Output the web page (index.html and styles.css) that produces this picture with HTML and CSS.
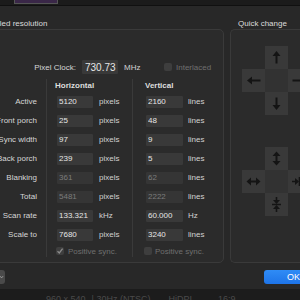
FILE: index.html
```html
<!DOCTYPE html>
<html lang="en">
<head>
    <meta charset="UTF-8">
    <meta name="viewport" content="width=device-width, initial-scale=1.0">
    <title>Custom Resolution</title>
    <link rel="stylesheet" href="styles.css">
</head>
<body>

    <div class="topbar"><div class="thumb"></div></div>

    <div class="sheet">
        <div class="panes">
            <section class="pane pane-main">
                <h2 class="pane-title">Scaled resolution</h2>
                <div class="group group-main">
                    <div class="clock-row">
                        <label class="clock-label" for="clock">Pixel Clock:</label>
                        <input class="field field-big" id="clock" type="text" value="730.73">
                        <span class="unit unit-mhz">MHz</span>
                        <span class="check"></span>
                        <span class="check-label">Interlaced</span>
                    </div>

                    <div class="timing">
                        <div class="col col-labels">
                            <div class="col-head"></div>
                            <div class="row">Active</div>
                            <div class="row">Front porch</div>
                            <div class="row">Sync width</div>
                            <div class="row">Back porch</div>
                            <div class="row">Blanking</div>
                            <div class="row">Total</div>
                            <div class="row">Scan rate</div>
                            <div class="row">Scale to</div>
                        </div>

                        <div class="col col-h">
                            <div class="col-head">Horizontal</div>
                            <div class="row"><input class="field" type="text" value="5120"><span class="unit">pixels</span></div>
                            <div class="row"><input class="field" type="text" value="25"><span class="unit">pixels</span></div>
                            <div class="row"><input class="field" type="text" value="97"><span class="unit">pixels</span></div>
                            <div class="row"><input class="field" type="text" value="239"><span class="unit">pixels</span></div>
                            <div class="row"><input class="field" type="text" value="361" disabled><span class="unit">pixels</span></div>
                            <div class="row"><input class="field" type="text" value="5481" disabled><span class="unit">pixels</span></div>
                            <div class="row"><input class="field" type="text" value="133.321"><span class="unit">kHz</span></div>
                            <div class="row"><input class="field" type="text" value="7680"><span class="unit">pixels</span></div>
                            <div class="sync-row">
                                <span class="check checked">
                                    <svg width="8" height="8" viewBox="0 0 8 8"><path d="M1.5 4.2 L3.3 6 L6.6 1.6" fill="none" stroke="#8a8a8a" stroke-width="1.3"/></svg>
                                </span>
                                <span class="check-label">Positive sync.</span>
                            </div>
                        </div>

                        <div class="col col-v">
                            <div class="col-head">Vertical</div>
                            <div class="row"><input class="field" type="text" value="2160"><span class="unit">lines</span></div>
                            <div class="row"><input class="field" type="text" value="48"><span class="unit">lines</span></div>
                            <div class="row"><input class="field" type="text" value="9"><span class="unit">lines</span></div>
                            <div class="row"><input class="field" type="text" value="5"><span class="unit">lines</span></div>
                            <div class="row"><input class="field" type="text" value="62" disabled><span class="unit">lines</span></div>
                            <div class="row"><input class="field" type="text" value="2222" disabled><span class="unit">lines</span></div>
                            <div class="row"><input class="field" type="text" value="60.000"><span class="unit">Hz</span></div>
                            <div class="row"><input class="field" type="text" value="3240"><span class="unit">lines</span></div>
                            <div class="sync-row">
                                <span class="check"></span>
                                <span class="check-label">Positive sync.</span>
                            </div>
                        </div>
                    </div>
                </div>
            </section>

            <section class="pane pane-quick">
                <h2 class="pane-title">Quick change</h2>
                <div class="group group-quick">
                    <!-- move -->
                    <div class="pad">
                        <div class="cell c-top">
                            <svg width="23" height="23" viewBox="0 0 23 23"><path d="M11.5 9 V17.5" stroke="#141414" stroke-width="2"/><path d="M11.5 5 L7.5 10 H15.5 Z" fill="#141414"/></svg>
                        </div>
                        <div class="cell c-left">
                            <svg width="23" height="23" viewBox="0 0 23 23"><path d="M9 11.5 H18.5" stroke="#141414" stroke-width="2"/><path d="M5 11.5 L10 7.5 V15.5 Z" fill="#141414"/></svg>
                        </div>
                        <div class="cell c-mid"></div>
                        <div class="cell c-right">
                            <svg width="23" height="23" viewBox="0 0 23 23"><path d="M4.5 11.5 H14" stroke="#141414" stroke-width="2"/><path d="M18 11.5 L13 7.5 V15.5 Z" fill="#141414"/></svg>
                        </div>
                        <div class="cell c-bottom">
                            <svg width="23" height="23" viewBox="0 0 23 23"><path d="M11.5 5.5 V14" stroke="#141414" stroke-width="2"/><path d="M11.5 18 L7.5 13 H15.5 Z" fill="#141414"/></svg>
                        </div>
                    </div>
                    <!-- resize -->
                    <div class="pad">
                        <div class="cell c-top">
                            <svg width="23" height="23" viewBox="0 0 23 23"><path d="M11.5 8 V15" stroke="#141414" stroke-width="2"/><path d="M11.5 4.5 L7.5 9 H15.5 Z M11.5 18.5 L7.5 14 H15.5 Z" fill="#141414"/></svg>
                        </div>
                        <div class="cell c-left">
                            <svg width="23" height="23" viewBox="0 0 23 23"><path d="M8 11.5 H15" stroke="#141414" stroke-width="2"/><path d="M4.5 11.5 L9 7.5 V15.5 Z M18.5 11.5 L14 7.5 V15.5 Z" fill="#141414"/></svg>
                        </div>
                        <div class="cell c-mid"></div>
                        <div class="cell c-right">
                            <svg width="23" height="23" viewBox="0 0 23 23"><path d="M4 11.5 H8 M15 11.5 H19 M11.5 7 V16" stroke="#141414" stroke-width="1.6"/><path d="M11 11.5 L7 8 V15 Z M12 11.5 L16 8 V15 Z" fill="#141414"/></svg>
                        </div>
                        <div class="cell c-bottom">
                            <svg width="23" height="23" viewBox="0 0 23 23"><path d="M11.5 4 V8 M11.5 15 V19 M7 11.5 H16" stroke="#141414" stroke-width="1.6"/><path d="M11.5 11 L8 7 H15 Z M11.5 12 L8 16 H15 Z" fill="#141414"/></svg>
                        </div>
                    </div>
                </div>
            </section>
        </div>

        <div class="actions">
            <button class="popup">
                <svg width="8" height="14" viewBox="0 0 8 14"><path d="M0 5.5 L2.5 8.5 L5 5.5" fill="none" stroke="#bdbdbd" stroke-width="1"/></svg>
            </button>
            <button class="ok">OK</button>
        </div>
    </div>

    <div class="behind">
        <span class="dot"></span>
        <span class="b1">960 x 540</span>
        <span class="b2">| 30Hz (NTSC)</span>
        <span class="b3">HiDPI</span>
        <span class="b4">16:9</span>
        <span class="b5">Enabled</span>
    </div>

</body>
</html>
```

FILE: styles.css
```css
body {
    margin: 0;
    width: 300px;
    height: 300px;
    overflow: hidden;
    background-color: #1c1c1c;
    font-family: 'Liberation Sans', Arial, Helvetica, sans-serif;
    font-size: 8px;
    color: #d6d6d6;
}

.topbar {
    height: 5px;
    background-color: #1b1b1b;
    border-bottom: 1px solid #101010;
}

.thumb {
    width: 42px;
    height: 3px;
    margin-left: 14px;
    background-color: #3a2748;
    border: 1px solid #555;
    border-top: none;
}

.sheet {
    background-color: #282828;
    padding: 13px 0 5px;
}

.panes {
    display: flex;
    align-items: stretch;
}

.pane {
    display: flex;
    flex-direction: column;
}

.pane-main {
    margin-left: -20px;
    width: 244px;
    flex-shrink: 0;
}

.pane-quick {
    margin-left: 6px;
    width: 90px;
    flex-shrink: 0;
}

.pane-title {
    margin: 0;
    font-size: 8px;
    font-weight: normal;
    line-height: 10px;
    height: 10px;
    color: #dcdcdc;
    padding-left: 6px;
}

.pane-quick .pane-title {
    padding-left: 8px;
}

.group {
    flex: 1;
    background-color: #2b2b2b;
    border: 1px solid #3a3a3a;
    border-radius: 5px;
    box-sizing: border-box;
}

.group-main {
    padding: 30px 0 5px;
}

/* pixel clock */
.clock-row {
    display: flex;
    align-items: center;
    height: 14px;
}

.clock-label {
    width: 95px;
    text-align: right;
    flex-shrink: 0;
}

.field {
    width: 36px;
    height: 12px;
    margin: 0;
    padding: 0 0 0 2px;
    box-sizing: border-box;
    border: none;
    border-radius: 1px;
    background-color: #393939;
    color: #e6e6e6;
    font-family: inherit;
    font-size: 8px;
    line-height: 12px;
    outline: none;
}

.field:disabled {
    color: #7c7c7c;
    background-color: #353535;
}

.field-big {
    height: 14px;
    margin-left: 6px;
    padding-left: 3px;
    font-size: 10px;
}

.unit {
    margin-left: 6px;
    color: #d2d2d2;
}

.unit-mhz {
    width: 16px;
    margin-right: 24px;
}

.check {
    display: inline-flex;
    align-items: center;
    justify-content: center;
    width: 8px;
    height: 8px;
    box-sizing: border-box;
    background-color: #3e3e3e;
    border-radius: 2px;
    flex-shrink: 0;
}

.check-label {
    margin-left: 4px;
    color: #6f6f6f;
}

/* timing table */
.timing {
    display: flex;
    margin-top: 5px;
}

.col {
    flex-shrink: 0;
}

.col-head {
    height: 13px;
    line-height: 13px;
    font-weight: bold;
    color: #dedede;
}

.row {
    height: 19px;
    display: flex;
    align-items: center;
}

.col-labels {
    width: 65px;
    padding-right: 9px;
    box-sizing: border-box;
}

.col-labels .row {
    justify-content: flex-end;
}

.col-h {
    width: 86px;
    padding-left: 10px;
    border-left: 1px solid #3a3a3a;
    box-sizing: border-box;
}

.col-h .col-head {
    margin-left: -2px;
}

.col-v {
    width: 92px;
    padding-left: 13px;
    border-left: 1px solid #3a3a3a;
    box-sizing: border-box;
}

.col-v .col-head {
    margin-left: -1px;
}

.col-v .field {
    width: 37px;
}

.col-v .unit {
    margin-left: 5px;
}

.sync-row {
    height: 12px;
    display: flex;
    align-items: center;
    margin-top: 1px;
}

.col-h .sync-row {
    margin-left: -1px;
}

.col-v .sync-row {
    margin-left: -2px;
}

.col-v .check-label {
    margin-left: 3px;
}

/* quick change */
.group-quick {
    padding: 16px 0 0 11px;
    border-right: none;
    border-radius: 5px 0 0 5px;
}

.pad {
    display: grid;
    grid-template-columns: 23px 23px 23px;
    grid-template-rows: 23px 23px 23px;
}

.pad + .pad {
    margin-top: 32px;
}

.cell {
    background-color: #393939;
}

.cell svg {
    display: block;
}

.c-top { grid-column: 2; grid-row: 1; }
.c-left { grid-column: 1; grid-row: 2; }
.c-mid { grid-column: 2; grid-row: 2; background-color: #323232; }
.c-right { grid-column: 3; grid-row: 2; }
.c-bottom { grid-column: 2; grid-row: 3; }

/* buttons */
.actions {
    display: flex;
    justify-content: space-between;
    margin-top: 7px;
    height: 14px;
}

.popup {
    width: 14px;
    height: 14px;
    margin-left: -9px;
    padding: 0 0 0 9px;
    border: none;
    border-radius: 3px;
    background-color: #4a4a4a;
    display: flex;
    align-items: center;
}

.ok {
    width: 56px;
    height: 14px;
    margin-right: -20px;
    padding: 0 0 0 23px;
    border: none;
    border-radius: 3px;
    background: linear-gradient(#2f8cf6, #1e74e8);
    color: #fff;
    font-family: inherit;
    font-size: 9px;
    text-align: left;
}

/* window behind */
.behind {
    display: flex;
    align-items: center;
    height: 12px;
    padding-top: 4px;
    color: #4a4a4a;
    font-size: 9px;
    white-space: nowrap;
}

.dot {
    width: 5px;
    height: 5px;
    border-radius: 50%;
    background-color: #3a3a3a;
    margin-left: 31px;
}

.b1 { margin-left: 15px; }
.b2 { margin-left: 6px; }
.b3 { margin-left: 18px; }
.b4 { margin-left: 26px; }
.b5 { margin-left: 68px; }
```
